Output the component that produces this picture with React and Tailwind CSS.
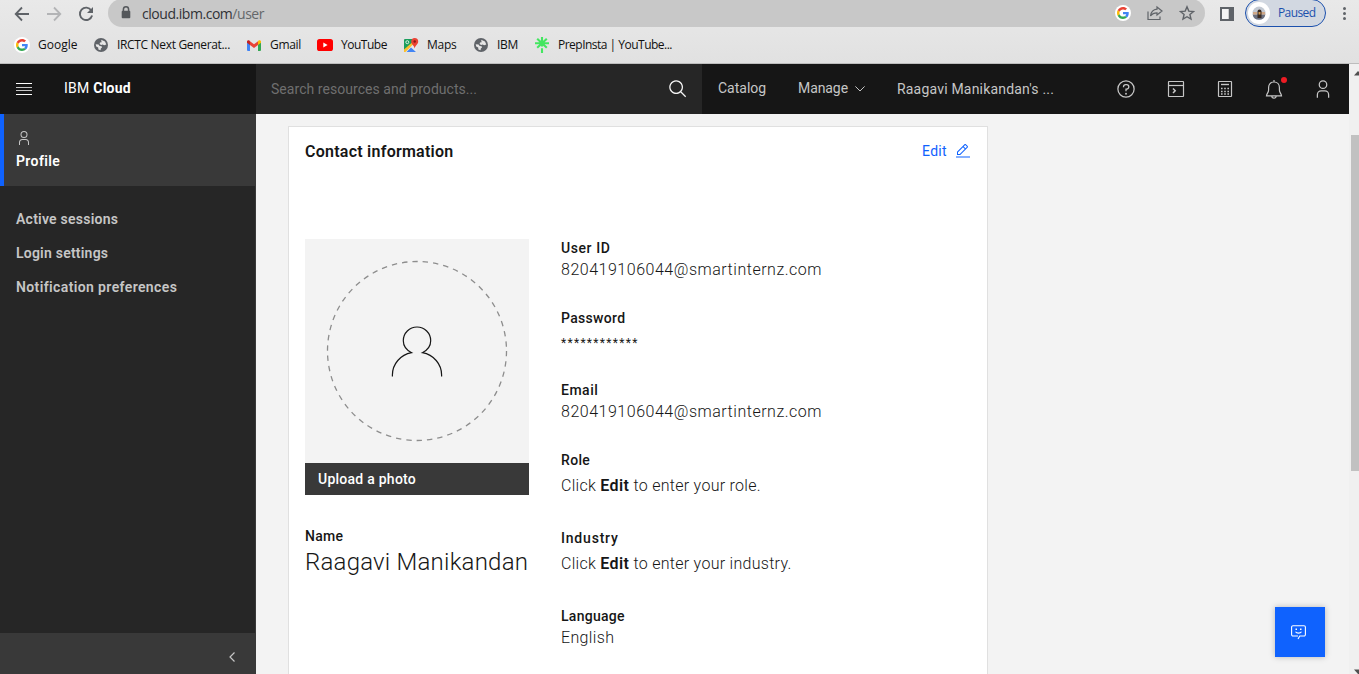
const GoogleG = ({ className }) => (
  <span className={`flex items-center justify-center rounded-full bg-white ${className}`}>
    <svg viewBox="0 0 48 48" className="size-3">
      <path fill="#4285F4" d="M46.98 24.55c0-1.57-.15-3.09-.38-4.55H24v9.02h12.94c-.58 2.96-2.26 5.48-4.78 7.18l7.73 6c4.51-4.18 7.09-10.36 7.09-17.65z" />
      <path fill="#EA4335" d="M24 9.5c3.54 0 6.71 1.22 9.21 3.6l6.85-6.85C35.9 2.38 30.47 0 24 0 14.62 0 6.51 5.38 2.56 13.22l7.98 6.19C12.43 13.72 17.74 9.5 24 9.5z" />
      <path fill="#FBBC05" d="M10.53 28.59A14.5 14.5 0 0 1 9.77 24c0-1.6.27-3.14.76-4.59l-7.98-6.19A23.9 23.9 0 0 0 0 24c0 3.88.92 7.54 2.56 10.78l7.97-6.19z" />
      <path fill="#34A853" d="M24 48c6.48 0 11.93-2.13 15.89-5.81l-7.73-6c-2.15 1.45-4.92 2.3-8.16 2.3-6.26 0-11.57-4.22-13.47-9.91l-7.98 6.19C6.51 42.62 14.62 48 24 48z" />
    </svg>
  </span>
);

const Globe = ({ className }) => (
  <svg viewBox="0 0 14 14" className={className}>
    <circle cx="7" cy="7" r="7" fill="#5f6368" />
    <path fill="#e6e6e6" d="M7.2 1.8 11 3.6 12.3 6.4 10.2 7.2 8.6 6.4 7.2 7 5.6 6 6 4.6 7.6 4.2zM1.7 6.2 4.6 6.6 5.6 8 7.6 8.2 8 9.6 6.8 10.4 6.6 12.3 4.4 11.6 4.2 9.6 2.2 8.6z" />
  </svg>
);

const Gmail = ({ className }) => (
  <svg viewBox="0 0 14 11" className={className}>
    <path fill="#4285F4" d="M0 2h3v9H1a1 1 0 0 1-1-1z" />
    <path fill="#34A853" d="M11 2h3v8a1 1 0 0 1-1 1h-2z" />
    <path fill="#EA4335" d="M3 1.2 7 4.2l4-3V5L7 8 3 5z" />
    <path fill="#C5221F" d="M0 1.6C0 .2 1.5-.3 2.4.6L3 1.2V5L0 2.8z" />
    <path fill="#FBBC04" d="M14 1.6C14 .2 12.5-.3 11.6.6L11 1.2V5l3-2.2z" />
  </svg>
);

const YouTube = ({ className }) => (
  <svg viewBox="0 0 16 12" className={className}>
    <rect width="16" height="12" rx="2.6" fill="#f00" />
    <path fill="#fff" d="M6.3 3.5v5L10.6 6z" />
  </svg>
);

const Maps = ({ className }) => (
  <svg viewBox="0 0 16 16" className={className}>
    <rect x="1" y="2" width="12.5" height="13" rx="1" fill="#e8eaed" />
    <path fill="#1a9e5c" d="M1 3a1 1 0 0 1 1-1h8l.5 4L1 14.5z" />
    <path fill="#fbc02d" d="m1 12.500 8-7L10.500 7 2.500 15H1z" />
    <path fill="#4285F4" d="M3.500 15 8 10.500l5 4.500z" />
    <circle cx="4.300" cy="5.200" r="1.500" fill="none" stroke="#fff" strokeWidth=".8" />
    <path fill="#ea4335" d="M11.700 1a3.500 3.500 0 0 1 3.500 3.500c0 2.500-2.700 3.500-3.500 7-.8-3.500-3.500-4.500-3.500-7A3.500 3.500 0 0 1 11.700 1z" />
    <circle cx="11.700" cy="4.500" r="1.200" fill="#8c1a12" />
  </svg>
);

const Linktree = ({ className }) => (
  <svg viewBox="0 0 14 16" className={className}>
    <path stroke="#43e660" strokeWidth="2.100" d="M7 0v9.500M0 6.200h14M2.200 1.700l9.600 9M11.800 1.700l-9.600 9M7 11.300V16" />
  </svg>
);

const User = ({ className }) => (
  <svg viewBox="0 0 32 32" fill="currentColor" className={className}>
    <path d="M16 4a5 5 0 1 1-5 5 5 5 0 0 1 5-5m0-2a7 7 0 1 0 7 7A7 7 0 0 0 16 2zM26 30H24V25a5 5 0 0 0-5-5H13a5 5 0 0 0-5 5v5H6V25a7 7 0 0 1 7-7h6a7 7 0 0 1 7 7z" />
  </svg>
);

const bookmarks = [
  { label: "Google", Icon: GoogleG, icon: "size-4", text: "ml-[8px] w-[40px]", gap: "mr-[16px]" },
  { label: "IRCTC Next Generat...", Icon: Globe, icon: "size-3.5", text: "ml-[9px] w-[114px] tracking-[-0.33px]", gap: "mr-[16px]" },
  { label: "Gmail", Icon: Gmail, icon: "h-[11px] w-[14px]", text: "ml-[9px] w-[31px] tracking-[-0.31px]", gap: "mr-[16px]" },
  { label: "YouTube", Icon: YouTube, icon: "h-[12px] w-[16px]", text: "ml-[8px] w-[46px] tracking-[-0.48px]", gap: "mr-[16px]" },
  { label: "Maps", Icon: Maps, icon: "size-4", text: "ml-[8px] w-[30px] tracking-[-0.25px]", gap: "mr-[17px]" },
  { label: "IBM", Icon: Globe, icon: "size-3.5", text: "ml-[9px] w-[22px] tracking-[-0.3px]", gap: "mr-[16px]" },
  { label: "PrepInsta | YouTube...", Icon: Linktree, icon: "h-4 w-3.5", text: "ml-[9px] tracking-[-0.51px]", gap: "" },
];

function Browser() {
  return (
    <div className="h-16 shrink-0 overflow-hidden border-b border-[#bdbdbd] bg-linear-to-b from-[#e9e9e9] to-[#e1e1e1] font-['Open_Sans',sans-serif]">
      <div className="flex h-[27px] items-center">
        <div className="flex w-[108px] items-center gap-[16px] pl-[14px] text-[#5f6368]">
          <svg viewBox="0 0 16 16" className="size-4" fill="none" stroke="currentColor" strokeWidth="1.800">
            <path d="M15 8H2M8 1.500 1.700 8 8 14.500" />
          </svg>
          <svg viewBox="0 0 16 16" className="size-4 text-[#b3b4b6]" fill="none" stroke="currentColor" strokeWidth="1.800">
            <path d="M1 8h13M8 1.500 14.300 8 8 14.500" />
          </svg>
          <svg viewBox="0 0 16 16" className="size-4" fill="none" stroke="currentColor" strokeWidth="1.900">
            <path d="M13.300 4.400A6.200 6.200 0 1 0 14.100 9.500" />
            <path fill="currentColor" stroke="none" d="M15 1v6H9z" />
          </svg>
        </div>
        <div className="-mt-px flex h-7 w-[1097px] items-center rounded-full bg-[#c8c8c8] pr-[10px] pl-[13px]">
          <svg viewBox="0 0 10 14" className="mr-[11px] h-[14px] w-[10px]">
            <path fill="none" stroke="#54575b" strokeWidth="1.500" d="M2.400 6V3.400a2.600 2.600 0 0 1 5.200 0V6" />
            <rect x=".7" y="4.800" width="8.600" height="7.400" rx="1" fill="#54575b" />
          </svg>
          <span className="flex-1 text-[14px] tracking-[-0.46px] text-[#303236]">
            cloud.ibm.com<span className="text-[#64676b]">/user</span>
          </span>
          <GoogleG className="mr-[16px] size-4" />
          <svg viewBox="0 0 16 16" className="mr-[16px] size-4" fill="none" stroke="#5f6368" strokeWidth="1.200">
            <path d="M1 6.500v8h12v-3M10 2l5 4-5 4V7.800C7 7.800 5 8.800 3.500 11 4 7 6.500 4.600 10 4.200z" />
          </svg>
          <svg viewBox="0 0 16 16" className="size-4" fill="none" stroke="#5f6368" strokeWidth="1.400">
            <path d="m8 1.800 1.800 4.300 4.700.4-3.600 3 1.100 4.600L8 11.700l-4 2.400 1.100-4.600-3.600-3 4.700-.4z" />
          </svg>
        </div>
        <svg viewBox="0 0 14 14" className="ml-[15px] size-3.5">
          <path fill="#5f6368" fillRule="evenodd" d="M0 0h14v14H0zM2 2v10h6.500V2z" />
          <path fill="#f4f4f4" d="M2 2h6.500v10H2z" />
        </svg>
        <div className="-mt-px ml-[11px] flex h-7 w-[81px] items-center rounded-full border border-[#1b50ad] bg-[#d2d8e1] pl-[2px]">
          <svg viewBox="0 0 22 22" className="mr-[8px] size-[22px]">
            <circle cx="11" cy="11" r="11" fill="#fff" />
            <circle cx="11" cy="11" r="6.500" fill="#c3c9d2" />
            <path fill="#6b7080" d="M4.600 12.500h12.800a6.500 6.500 0 0 1-12.800 0z" />
            <path fill="#d0a888" d="M5 10h4v2.500H5zM13 10h4l.3 2.500H13z" />
            <path fill="#3b2b22" d="M9.500 9.500a2 2 0 0 1 4 0V16h-4z" />
            <path fill="#d39a52" d="M10.500 10h2v2.500h-2z" />
          </svg>
          <span className="text-[12px] tracking-[-0.6px] text-[#1b50ad]">Paused</span>
        </div>
        <div className="ml-[17px] flex flex-col gap-[2px]">
          <i className="size-[3px] rounded-full bg-[#5f6368]" />
          <i className="size-[3px] rounded-full bg-[#5f6368]" />
          <i className="size-[3px] rounded-full bg-[#5f6368]" />
        </div>
      </div>
      <div className="flex h-[36px] items-center pl-[14px] text-[12px] text-[#111]">
        {bookmarks.map(({ label, Icon, icon, text, gap }) => (
          <div key={label} className={`flex items-center ${gap}`}>
            <Icon className={`shrink-0 ${icon}`} />
            <span className={`whitespace-nowrap ${text}`}>{label}</span>
          </div>
        ))}
      </div>
    </div>
  );
}

function Header() {
  return (
    <header className="flex h-[50px] shrink-0 items-center bg-[#161616] text-[14px] text-[#c6c6c6]">
      <div className="flex w-64 items-center pl-4">
        <div className="flex h-3 w-4 flex-col justify-between">
          <i className="h-px bg-white" />
          <i className="h-px bg-[#c6c6c6]" />
          <i className="h-px bg-[#c6c6c6]" />
          <i className="h-px bg-white" />
        </div>
        <span className="-mt-0.5 ml-8 tracking-[0.25px] text-white">
          IBM <b className="font-bold">Cloud</b>
        </span>
      </div>
      <div className="flex h-full w-[446px] items-center justify-between bg-[#262626] pr-[14px] pl-[15px]">
        <span className="tracking-[0.05px] text-[#6f6f6f]">Search resources and products...</span>
        <svg viewBox="0 0 32 32" fill="#f4f4f4" className="size-5">
          <path d="M29 27.586l-7.552-7.552a11.018 11.018 0 1 0-1.414 1.414L27.586 29zM4 13a9 9 0 1 1 9 9A9.010 9.010 0 0 1 4 13z" />
        </svg>
      </div>
      <span className="-mt-0.5 ml-4 w-20">Catalog</span>
      <span className="-mt-0.5 w-[57px] tracking-[-0.08px]">Manage</span>
      <svg viewBox="0 0 10 6" className="h-[6px] w-[10px]" fill="none" stroke="#c6c6c6">
        <path d="M.4.400 5 5 9.600.400" />
      </svg>
      <span className="ml-[32px] w-[219px] tracking-[0.19px]">Raagavi Manikandan's ...</span>
      <div className="flex items-center gap-[29px]">
        <svg viewBox="0 0 32 32" fill="currentColor" className="size-5">
          <circle cx="16" cy="16" r="13" fill="none" stroke="currentColor" strokeWidth="2" />
          <circle cx="16" cy="23.500" r="1.500" />
          <path d="M17 8H15.500A4.490 4.490 0 0 0 11 12.500V13h2v-.5A2.500 2.500 0 0 1 15.500 10H17a2.500 2.500 0 0 1 0 5H15v4.500h2V17a4.500 4.500 0 0 0 0-9z" />
        </svg>
        <svg viewBox="0 0 20 20" className="ml-px size-5" fill="none" stroke="currentColor">
          <rect x="2.500" y="2.500" width="15" height="15" rx=".5" strokeWidth="1.200" />
          <path strokeWidth="1.200" d="M2.500 6.500h15" />
          <path strokeWidth="1.500" d="M7 9.500l2.200 2.200L7 14" />
        </svg>
        <svg viewBox="0 0 20 20" className="size-5" fill="none" stroke="currentColor">
          <rect x="3.500" y="2.500" width="13" height="15" rx=".5" strokeWidth="1.200" />
          <path d="M6 5.500h8" strokeWidth="1.400" />
          <path d="M6 9.500h8M6 12.500h8M6 15h8" strokeWidth="1.500" strokeDasharray="1.600" />
        </svg>
        <div className="relative">
          <svg viewBox="0 0 20 20" className="size-5" fill="none" stroke="currentColor" strokeWidth="1.200">
            <path d="M10 1v2M10 3C6.500 3 4.600 5.600 4.600 8.600V11c0 2.600-1.800 3.400-2.100 5.900h15c-.3-2.500-2.100-3.300-2.100-5.900V8.600C15.400 5.600 13.500 3 10 3zM7.800 17a2.200 2.200 0 0 0 4.400 0" />
          </svg>
          <i className="absolute -top-[2px] left-[17px] size-[6px] rounded-full bg-[#ee1c24]" />
        </div>
        <User className="size-5" />
      </div>
    </header>
  );
}

function Sidebar() {
  return (
    <aside className="flex w-64 shrink-0 flex-col border-r border-[#393939] bg-[#262626] text-[14px] font-semibold text-[#c6c6c6]">
      <div className="h-[72px] border-l-4 border-[#0f62fe] bg-[#393939] pt-4 pl-3">
        <User className="size-4" />
        <div className="mt-[5px] leading-5 tracking-[0.39px] text-white">Profile</div>
      </div>
      <nav className="flex flex-1 flex-col gap-[14px] pt-[23px] pl-4 leading-5">
        <span className="tracking-[0.24px]">Active sessions</span>
        <span className="tracking-[0.22px]">Login settings</span>
        <span className="tracking-[0.38px]">Notification preferences</span>
      </nav>
      <div className="flex h-[41px] justify-end bg-[#393939] pt-[19px] pr-[20px]">
        <svg viewBox="0 0 6 10" className="h-[10px] w-[6px]" fill="none" stroke="#c6c6c6" strokeWidth="1.200">
          <path d="M5.500.500 1 5l4.500 4.500" />
        </svg>
      </div>
    </aside>
  );
}

const Hint = ({ what }) => (
  <span className="tracking-[0.28px]">
    Click <b className="font-semibold tracking-[0.4px]">Edit</b> to enter your {what}.
  </span>
);

const fields = [
  { label: "User ID", l: "tracking-[0.58px]", value: "820419106044@smartinternz.com", v: "text-[16px] tracking-[0.52px]", box: "h-[70px]" },
  { label: "Password", l: "tracking-[0.32px]", value: "************", v: "pt-[3px] text-[12px] font-normal tracking-[1.300px]", box: "h-[72px]" },
  { label: "Email", l: "tracking-[0.5px]", value: "820419106044@smartinternz.com", v: "text-[16px] tracking-[0.52px]", box: "h-[70px]" },
  { label: "Role", l: "tracking-[0.35px]", value: <Hint what="role" />, v: "mt-1 text-[16px]", box: "h-[78px]" },
  { label: "Industry", l: "tracking-[0.8px]", value: <Hint what="industry" />, v: "mt-1 text-[16px]", box: "h-[78px]" },
  { label: "Language", l: "tracking-[0.27px]", value: "English", v: "text-[16px] tracking-[0.35px]", box: "h-[70px]" },
];

function ContactCard() {
  return (
    <section className="mt-3 ml-8 w-[700px] border border-b-0 border-[#e0e0e0] bg-white px-4 text-[#161616]">
      <div className="flex h-[50px] items-center justify-between">
        <h2 className="text-[16px] font-semibold tracking-[0.25px]">Contact information</h2>
        <div className="-mt-0.5 flex items-center text-[14px] tracking-[0.32px] text-[#0f62fe]">
          Edit
          <svg viewBox="0 0 32 32" fill="currentColor" className="ml-[8px] size-4">
            <path d="M2 27h28v2H2zM25.400 9c.8-.8.8-2 0-2.800l-3.600-3.600c-.8-.8-2-.8-2.800 0l-15 15V24h6.400L25.400 9zM20.400 4 24 7.600l-3 3L17.400 7l3-3zM6 22v-3.600l10-10 3.600 3.600-10 10H6z" />
          </svg>
        </div>
      </div>
      <div className="flex gap-8 pt-[61px]">
        <div className="w-56 pt-px">
          <svg viewBox="0 0 224 224" className="block size-56 bg-[#f3f3f3]" fill="none">
            <circle cx="112" cy="112" r="89.500" stroke="#8d8d8d" strokeWidth="1.300" strokeDasharray="5.400 5.010" />
            <path stroke="#161616" strokeWidth="1.200" d="M87.400 137.500V136c0-11 8-20.200 19.200-22.300-5.200-2.700-8.300-6.600-8.300-12a13.700 13.700 0 0 1 27.400 0c0 5.400-3.100 9.300-8.300 12 11.200 2.100 19.200 11.300 19.200 22.300v1.500" />
          </svg>
          <div className="h-8 bg-[#393939] pl-[13px] text-[14px] leading-8 font-medium tracking-[0.25px] text-white">
            Upload a photo
          </div>
          <div className="mt-[31px] text-[14px] leading-5 font-medium tracking-[0.3px]">Name</div>
          <div className="text-[24px] leading-8 font-light tracking-[0.22px] whitespace-nowrap">Raagavi Manikandan</div>
        </div>
        <div>
          {fields.map(({ label, l, value, v, box }) => (
            <div key={label} className={box}>
              <div className={`text-[14px] leading-5 font-medium ${l}`}>{label}</div>
              <div className={`leading-6 font-light ${v}`}>{value}</div>
            </div>
          ))}
        </div>
      </div>
    </section>
  );
}

export default function App() {
  return (
    <div className="flex h-[674px] w-[1359px] flex-col overflow-hidden">
      <Browser />
      <div className="flex min-h-0 flex-1">
        <div className="relative flex w-[1349px] flex-col bg-[#f3f3f3] font-['Roboto',sans-serif]">
          <Header />
          <div className="flex min-h-0 flex-1 overflow-hidden">
            <Sidebar />
            <ContactCard />
          </div>
          <button className="absolute right-6 bottom-[17px] flex size-[50px] items-center justify-center bg-[#0f62fe] pr-[3px] shadow-[0_0_6px_rgba(0,0,0,0.25)]">
            <svg viewBox="0 0 15 15" className="size-[15px]" fill="none" stroke="#fff" strokeWidth="1.100">
              <path d="M7 14 8.800 11H13a1.400 1.400 0 0 0 1.400-1.400V2.100A1.400 1.400 0 0 0 13 .700H2A1.400 1.400 0 0 0 .6 2.100V9.600A1.400 1.400 0 0 0 2 11H7" />
              <path d="M4.500 6.800c1.200 1.700 4.800 1.700 6 0" />
              <path d="M4.500 4.200H6M9 4.200h1.500" strokeWidth="1.500" />
            </svg>
          </button>
        </div>
        <div className="flex w-[10px] flex-col items-end justify-between overflow-hidden bg-[#f0f0f0]">
          <svg viewBox="0 0 5 5" className="mt-[7px] h-[5px] w-[5px]">
            <path fill="#505050" d="M0 4.500 4 0 5 1v3.500z" />
          </svg>
          <div className="-mt-[140px] h-[336px] w-2 bg-[#c1c1c1]" />
          <svg viewBox="0 0 5 5" className="h-[5px] w-[5px]">
            <path fill="#505050" d="M0 .5h5V5H4z" />
          </svg>
        </div>
      </div>
    </div>
  );
}
